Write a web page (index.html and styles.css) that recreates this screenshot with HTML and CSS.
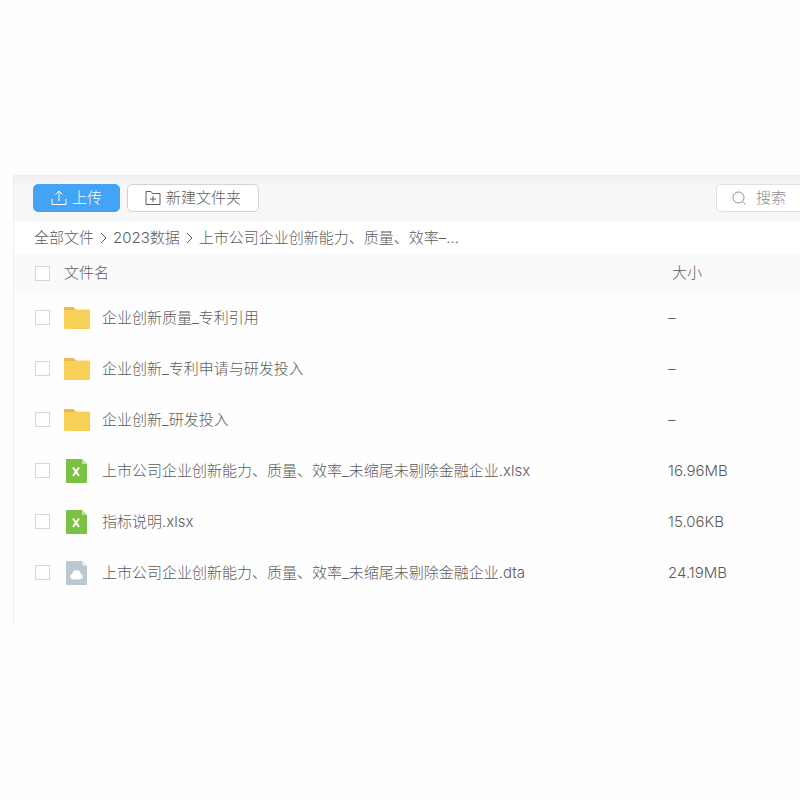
FILE: index.html
```html
<!DOCTYPE html>
<html lang="zh-CN">
<head>
  <meta charset="UTF-8">
  <title>全部文件</title>
  <link rel="stylesheet" href="styles.css">
</head>
<body>
  <svg class="symbols" aria-hidden="true">
    <symbol id="icon-folder" viewBox="0 0 26 24">
      <path d="M0 1.500q0-.5.500-.5H9q1 0 1.500.7L12 4v4H0z" fill="#e6bb50"/>
      <path d="M0 4h10.500l1.500-.5h13q1 0 1 1V22q0 1-1 1H1q-1 0-1-1z" fill="#f8d057"/>
    </symbol>
    <symbol id="icon-excel" viewBox="0 0 26 24">
      <path d="M3 0h15l5 5v18q0 1-1 1H3q-1 0-1-1V1q0-1 1-1z" fill="#7bc143"/>
      <path d="M18 0l5 5h-4q-1 0-1-1z" fill="#c3e5a6"/>
      <path d="M9 8.500l6 8.500M15 8.500L9 17" fill="none" stroke="#fff"/>
    </symbol>
    <symbol id="icon-cloud" viewBox="0 0 26 24">
      <path d="M3 0h15l5 5v18q0 1-1 1H3q-1 0-1-1V1q0-1 1-1z" fill="#bac8d1"/>
      <path d="M18 0l5 5h-4q-1 0-1-1z" fill="#e0e8ed"/>
      <path d="M9 18.500a3 3 0 0 1-.8-5.800 4.400 4.400 0 0 1 8.600 0A3 3 0 0 1 16 18.500z" fill="#fff"/>
    </symbol>
  </svg>

  <div class="panel">
    <div class="toolbar">
      <button class="btn upload" type="button">
        <svg width="16" height="16" viewBox="0 0 16 16"><path d="M8 11V1M4.500 4.500L8 1l3.500 3.500M1 9v5.500h14V9"/></svg>
        上传
      </button>
      <button class="btn new-folder" type="button">
        <svg width="16" height="16" viewBox="0 0 16 16"><path d="M1 14.500v-13h5l1.500 2H15v11zM8 6v6M5 9h6"/></svg>
        新建文件夹
      </button>
      <label class="search">
        <svg width="16" height="16" viewBox="0 0 16 16"><circle cx="7.500" cy="7.500" r="5.500"/><path d="M11.500 11.500l3 3"/></svg>
        <input type="text" placeholder="搜索" aria-label="搜索">
      </label>
    </div>

    <nav class="breadcrumb">
      <a href="#">全部文件</a>
      <svg width="7" height="12" viewBox="0 0 7 12"><path d="M1 1l5 5-5 5"/></svg>
      <a href="#">2023数据</a>
      <svg width="7" height="12" viewBox="0 0 7 12"><path d="M1 1l5 5-5 5"/></svg>
      <a href="#">上市公司企业创新能力、质量、效率–...</a>
    </nav>

    <table>
      <thead>
        <tr>
          <th class="check"><input type="checkbox" aria-label="全选"></th>
          <th>文件名</th>
          <th class="size">大小</th>
        </tr>
      </thead>
      <tbody>
        <tr>
          <td class="check"><input type="checkbox" id="f1"></td>
          <td><label class="file" for="f1"><svg class="icon"><use href="#icon-folder"/></svg>企业创新质量_专利引用</label></td>
          <td class="size">–</td>
        </tr>
        <tr>
          <td class="check"><input type="checkbox" id="f2"></td>
          <td><label class="file" for="f2"><svg class="icon"><use href="#icon-folder"/></svg>企业创新_专利申请与研发投入</label></td>
          <td class="size">–</td>
        </tr>
        <tr>
          <td class="check"><input type="checkbox" id="f3"></td>
          <td><label class="file" for="f3"><svg class="icon"><use href="#icon-folder"/></svg>企业创新_研发投入</label></td>
          <td class="size">–</td>
        </tr>
        <tr>
          <td class="check"><input type="checkbox" id="f4"></td>
          <td><label class="file" for="f4"><svg class="icon"><use href="#icon-excel"/></svg>上市公司企业创新能力、质量、效率_未缩尾未剔除金融企业.xlsx</label></td>
          <td class="size">16.96MB</td>
        </tr>
        <tr>
          <td class="check"><input type="checkbox" id="f5"></td>
          <td><label class="file" for="f5"><svg class="icon"><use href="#icon-excel"/></svg>指标说明.xlsx</label></td>
          <td class="size">15.06KB</td>
        </tr>
        <tr>
          <td class="check"><input type="checkbox" id="f6"></td>
          <td><label class="file" for="f6"><svg class="icon"><use href="#icon-cloud"/></svg>上市公司企业创新能力、质量、效率_未缩尾未剔除金融企业.dta</label></td>
          <td class="size">24.19MB</td>
        </tr>
      </tbody>
    </table>
  </div>
</body>
</html>
```
FILE: styles.css
```css
* {
  box-sizing: border-box;
}

body {
  margin: 0;
  padding-top: 175px;
  background: #fefefe;
  color: #5c5c5c;
  font-family: Inter, "Noto Sans CJK SC", sans-serif;
  font-size: 15px;
  font-weight: 300;
  line-height: 20px;
}

button, input {
  font: inherit;
  color: inherit;
}

svg {
  flex: none;
  fill: none;
  stroke: currentColor;
}

.symbols {
  display: none;
}

.symbols path {
  stroke-width: 0;
}

.symbols path[stroke] {
  stroke-width: 2;
}

.panel {
  margin-left: 13px;
  padding-bottom: 26px;
  border-left: 1px solid #f0f0f0;
}

.toolbar {
  display: flex;
  align-items: center;
  gap: 7px;
  height: 47px;
  padding: 0 0 1px 19px;
  background: linear-gradient(#efefef, #f7f7f7 10px);
}

.btn {
  display: flex;
  align-items: center;
  justify-content: center;
  gap: 5px;
  height: 28px;
  padding: 0 17px;
  border: 1px solid #d2d2d2;
  border-radius: 5px;
  background: #fff;
}

.upload {
  border-color: #43a3f5;
  background: #43a3f5;
  color: #fff;
}

.search {
  display: flex;
  align-items: center;
  gap: 9px;
  width: 84px;
  height: 28px;
  margin-left: auto;
  padding-left: 14px;
  border: 1px solid #e0e0e0;
  border-right: none;
  border-radius: 5px 0 0 5px;
  background: #fff;
  color: #8c8c8c;
}

.search input {
  width: 100%;
  min-width: 0;
  padding: 0;
  border: none;
  outline: none;
  background: none;
}

.search input::placeholder {
  color: #8c8c8c;
}

.breadcrumb {
  display: flex;
  align-items: center;
  gap: 6px;
  height: 32px;
  padding-left: 20px;
  background: #fff;
}

.breadcrumb a {
  color: inherit;
  text-decoration: none;
}

table {
  width: 100%;
  border-collapse: collapse;
}

th, td {
  height: 51px;
  padding: 0;
  font-weight: inherit;
  text-align: left;
}

th {
  height: 38px;
  background: #fafafa;
}

.check {
  width: 50px;
  padding-left: 21px;
}

.check input {
  display: block;
  appearance: none;
  width: 15px;
  height: 15px;
  margin: 0;
  border: 1px solid #d6d6d6;
  background: #fff;
}

.size {
  width: 132px;
}

th.size {
  padding-left: 4px;
}

.file {
  display: flex;
  align-items: center;
  gap: 12px;
}

.icon {
  width: 26px;
  height: 24px;
}
```
